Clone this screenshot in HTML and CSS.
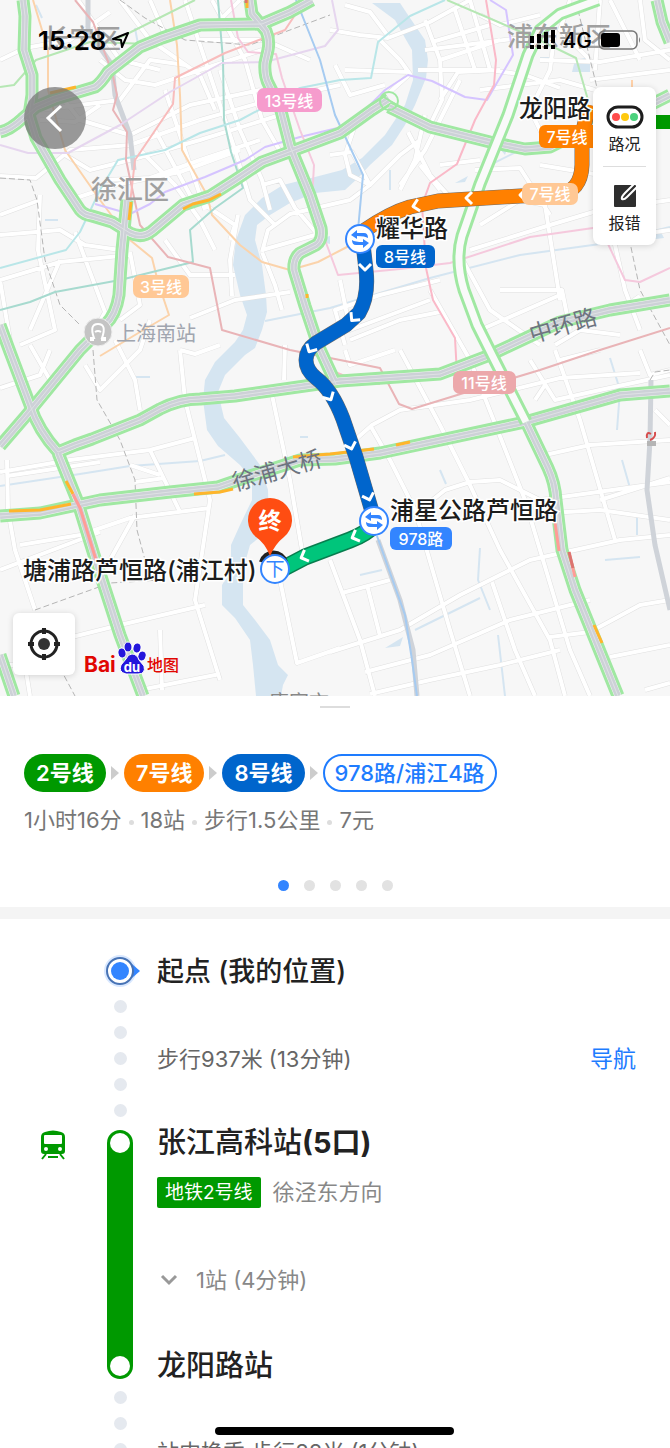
FILE: index.html
```html
<!DOCTYPE html>
<html lang="zh-CN">
<head>
  <meta charset="UTF-8" />
  <meta name="viewport" content="width=device-width, initial-scale=1.0"/>
  <title>公交路线</title>
  <link rel="stylesheet" href="styles.css">
</head>
<body>
  <div class="app">
    <section class="map">
      <svg class="map-canvas" viewBox="0 0 670 696" role="img" aria-label="路线地图">
        <defs>
          <g id="streets">
            <path d="M0 60L25 48L70 40L110 12M78 0L120 60L160 70M120 0L150 40L200 75L215 110M150 0L165 35L215 25L240 0M185 0L205 60L235 150L250 200L275 225M212 0L245 60L262 120L285 160M60 95L80 120L130 135L190 105L260 90M40 120L75 122L100 105M40 110L120 100L150 60L185 65M100 60L125 80L155 85L200 70L262 50"/>
            <path d="M0 176L36 178L70 150L130 145L200 120L270 100L340 85M65 155L90 170L130 160L200 140L280 115M45 160L70 200L115 185L180 172L240 150M105 180L150 178L200 160L260 140M140 150L175 185L200 220L215 250M155 130L190 195L235 225L230 240M165 90L185 150L205 210M220 70L240 130L262 180L270 210M200 40L265 40L310 60M0 235L60 230L85 245L120 250M40 195L38 250L55 330L20 345M0 215L40 200M75 232L105 312L85 350M0 280L60 262L130 255M130 252L140 305L120 320M165 240L190 275L235 275M238 215L230 260L232 296M60 260L30 330M10 340L0 280"/>
            <path d="M262 185L280 180L295 208L318 235M262 252L268 230L290 214L350 200L370 185M262 250L315 235M262 252L275 285L282 310M190 318L235 300L290 292M0 388L40 375L50 350M50 380L30 345M85 365L100 390L140 350L150 320M115 340L135 380L140 410M180 350L185 400L200 460L210 500L195 600L220 680M0 472L70 460L150 450L195 438M7 460L8 510L15 550L35 610M7 476L100 462M130 465L160 475M150 450L180 512M135 482L165 478M20 545L80 535L130 518L210 508M110 560L135 515M0 570L100 532M60 640L120 625L205 605M160 630L162 690M140 690L220 674M25 665L30 696M0 665L30 665M272 395L290 480L302 550M280 580L297 663L340 648M180 350L195 354L220 345M285 345L284 380"/>
            <path d="M330 30L360 35L388 38L430 22L470 0M378 38L400 60L410 74L390 92M345 70L410 72M345 5L370 12L388 36M335 65L350 95L385 85M425 20L440 60L442 100L430 125M455 10L475 70M440 60L500 40M470 0L490 70M432 42L490 25M440 100L458 72L500 70M330 155L352 152L370 185M355 125L345 155L350 175L370 185L400 155L420 140M408 132L430 175L448 195M400 185L425 150L440 120L460 80M420 165L440 190M425 50L520 38M418 70L490 70L525 75L560 88M425 115L415 160L400 190M440 165L480 160M555 30L550 70L530 110M600 0L595 70M540 60L600 62L670 50M590 80L670 70M480 90L560 80L595 90M610 0L640 60M480 15L500 25L540 15M640 0L645 40L670 60M570 0L560 30L590 60M530 110L545 140"/>
            <path d="M470 250L550 225L600 210L670 200M480 225L520 200L545 205L560 300M475 170L520 168L550 215M500 290L562 290L570 330M430 290L470 360L525 500L570 650L590 696M480 330L560 295M340 280L350 330L430 300M345 345L335 310L380 295L440 280M350 340L400 320L440 312M460 255L490 310L540 345M605 200L625 290L640 330M600 240L670 230M620 310L640 296M555 345L580 330L620 335M540 165L600 175"/>
            <path d="M345 350L350 365L395 350M400 350L440 425L470 485L500 550L550 640L565 696M355 440L372 425L400 410L470 400L560 378L640 373M370 425L390 460L415 510L450 630L470 696M420 510L445 490L470 482L500 480L540 500L670 482M545 455L590 445L670 440M555 350L580 420L615 540M530 360L555 400L600 390L670 375M640 350L650 375L670 370M560 360L600 350M330 560L360 640L375 696M342 593L390 580M367 585L380 636M330 652L400 630L460 595L530 560L620 540L670 535M365 672L430 655L510 620L590 600M550 513L600 510L670 520M492 582L515 650L535 696M370 694L430 680L500 665L560 650M550 637L590 632L640 605L670 600M610 657L670 645M645 690L670 683M600 500L670 478M655 410L670 425M535 400L545 385"/>
          </g>
          <g id="expressways">
            <path d="M23 0L25 16L24 50L32 75L32 95L29 115L36 138L60 180L80 210Q84 215 92 216L112 222L130 233Q142 239 152 231L183 205L210 196L235 180L262 162L300 148L340 133L372 110L389 99"/>
            <path d="M389 107L430 127L490 142L525 149L550 147L580 132L630 115L670 95"/>
            <path d="M0 132Q10 130 22 119L36 107L55 99L95 87Q101 83 108 72L140 47L162 38L200 25L262 24L290 12L312 0"/>
            <path d="M250 0L252 14L266 31Q270 40 268 50L265 63Q264 76 269 85L280 107L290 146L310 195L321 228Q323 240 316 245L300 253Q293 259 294 270L305 306L318 345L336 384"/>
            <path d="M127 200L122 250L119 295Q116 315 105 325L80 350L25 417L0 446"/>
            <path d="M0 325L10 352L30 405Q38 430 58 452L75 445L92 439L140 420L160 409Q180 399 200 399L235 396L340 381L440 374L490 355L560 322L610 310L670 300"/>
            <path d="M58 453L77 500L95 558L120 635L143 696"/>
            <path d="M0 516L40 513L100 500L170 492L218 487L250 476L300 460L335 459L380 453L525 422L620 395L670 391"/>
            <path d="M526 422L548 468Q555 483 556 500L562 550L575 590L618 696"/>
            <path d="M0 655L14 696M657 0L662 22L670 42"/>
          </g>
          <g id="elevated">
            <path d="M598 0L560 14L540 30L528 55L508 115L480 184L462 236Q455 260 464 290L477 325L492 355L526 422"/>
          </g>
          <path id="orange-route" d="M589 105L582 135L582 165Q581 192 558 194L520 196L438 201L410 207Q390 213 365 230L360 236"/>
          <path id="blue-route" d="M362 235L366 270Q369 296 359 313L346 325L316 343Q306 350 306 360Q306 370 316 378Q332 390 343 419L356 457L373 515"/>
          <g id="transfer">
            <circle r="14" fill="#fff" stroke="#3385ff" stroke-width="2"/>
            <path d="M-9-4L-3-9V-6H4Q8-6 8-1Q5-3-3-3V0ZM9 4L3 9V6H-4Q-8 6-8 1Q-5 3 3 3V0Z" fill="#3385ff"/>
          </g>
          <path id="chevron" class="chevron" d="M4-6L-2 0L4 6"/>
        </defs>

        <!-- water -->
        <path class="water" d="M372 3L395 20L405 38L412 50L413 80L405 105L385 135L362 158L342 170L315 177L283 185L262 198L245 215L236 240L233 265L240 295L247 315L243 330L235 342L215 362L205 380L203 400L207 430L218 446L240 465L252 480V500L240 525L231 545V570L222 585V605L235 618L250 640L253 665L256 696H281L283 685L288 675L278 665L270 640L255 620L243 605V570L250 545L269 530L268 490L260 465L240 438L224 418L218 392L225 375L245 355L255 348L262 330L267 312L266 295L262 265L255 240L257 225L270 215L290 203L315 193L345 190L358 178L370 165L392 145L405 125L415 105L426 78L428 60L425 40L408 15L400 3Z"/>
        <path class="creek" d="M265 321L330 308L430 278L520 255L600 244L670 227M0 486L80 474L130 466L200 461L225 455M36 5L42 18M135 28L140 55M480 170L520 150M390 170V190M610 358L620 390L617 430M622 460L630 488M480 548L478 580L490 610M498 635L505 696M415 630L480 598M360 575L382 570M45 220H58M136 377H150M300 437H308M605 560L640 557M440 470L446 484M540 58H550M637 515V535"/>
        <path class="water" d="M575 60L590 57V72H572ZM385 648L403 637L400 646ZM455 183L468 176L465 182ZM315 240L330 236V244ZM648 240L660 230L664 238ZM501 150L507 149L505 155Z"/>

        <use href="#streets" class="street-edge"/>
        <use href="#streets" class="street"/>
        <path class="rail" d="M120 0L145 18L185 40L250 45L330 15M0 178L30 180L37 200L45 260L60 305L80 325M93 350L97 400L120 440L135 480L137 530L145 560M35 610L110 583L160 580M60 668L75 696M578 10L600 100L640 290L670 345M650 380L655 372L670 370"/>
        <path class="rail-wide" d="M651 380L650 440L647 490L655 545L670 610M88 0V30L112 65L115 95L130 135L134 170M378 540L400 600L413 650L417 696"/>

        <!-- metro network -->
        <g class="metro">
          <path stroke="#fbd3ab" d="M33 0L48 50L48 90L65 150L100 200L130 240L152 258L158 282L169 315L140 332L100 356M170 0L177 45L180 95L182 150L207 195L212 215L240 245L262 262L290 270L318 262L345 248L360 240"/>
          <path stroke="#a7dacf" d="M218 0L223 60L224 120L231 152L243 188L215 208L190 230L193 262L120 280L55 292L30 302L0 310"/>
          <path stroke="#b9e6e8" d="M0 268L66 250L80 232L100 190L118 160L165 150L200 133L240 120L300 88L340 80L371 78L378 42L410 16L445 0"/>
          <path stroke="#e9b4b7" d="M75 0L93 22L112 72L117 95L113 110L127 132L126 160L140 225L168 257L210 268L222 330L290 350L380 368L399 404L412 409L480 388L540 370L600 350L670 328"/>
          <path stroke="#f8bcbc" d="M295 15L285 30L225 53L175 78L173 104L135 160L129 212"/>
          <path stroke="#d5c4ff" d="M95 204L130 214L150 204L165 192L205 177L245 160L265 147L300 137L350 125L385 90L408 75L432 81L465 97L487 100L513 55L506 10L490 0"/>
          <path stroke="#e6d6ef" d="M0 145L28 153L68 153L120 125L170 92L222 63L265 62L325 46L338 30L332 0"/>
          <path stroke="#a6cbf1" d="M296 0L320 60L335 115L363 175L358 230M377 536L405 615L412 660L417 696"/>
          <path stroke="#f5c9dd" d="M231 0L238 38L248 52L276 54L282 78L300 130L314 165L312 200L325 240L338 275L400 269L450 263L530 237L600 227L625 280L640 282L670 268"/>
          <path stroke="#fab9c8" d="M486 0L496 60L494 85L475 120L457 164L430 183L422 205L426 268L433 300L455 338L457 375M330 370L350 378L380 384"/>
          <path stroke="#b6e7b4" d="M0 87L14 85L36 60L90 42L150 44M115 40L195 0M447 0L535 38L576 58L588 100"/>
          <path stroke="#ffd1a8" d="M632 80V100"/>
        </g>

        <use href="#expressways" class="express-edge"/>
        <use href="#expressways" class="express-gap"/>
        <use href="#expressways" class="express-core"/>
        <use href="#expressways" class="express-mid"/>
        <use href="#elevated" class="express-edge"/>
        <use href="#elevated" class="express-white"/>
        <circle class="ring" cx="389" cy="101" r="9"/>
        <path class="ring" d="M382 96L397 105"/>
        <path class="slow" d="M247 0V8M50 93L76 87M131 202L129 220M183 209L193 204L209 200L221 194M9 511L40 510L71 504M66 481L73 494M194 494L220 492L233 489M293 457L330 454L374 449M396 445L410 442M594 625L602 643M307 294V298"/>
        <path class="jam" d="M73 494L80 508L96 560M555 523L559 551M569 552L575 577"/>
        <path class="dark-jam" d="M569 552L573 568M246 0V3"/>

        <!-- names on the map -->
        <text class="district" x="43" y="48">长宁区</text>
        <text class="district" x="91" y="199">徐汇区</text>
        <text class="district" x="507" y="46">浦东新区</text>
        <text class="town" x="269" y="710">唐家市</text>
        <text class="road-name" transform="translate(532 343) rotate(-16)">中环路</text>
        <text class="road-name" transform="translate(235 491) rotate(-16)">徐浦大桥</text>
        <text class="railway-name" x="116" y="341">上海南站</text>
        <circle cx="98" cy="332" r="14" fill="#c4c4c4" stroke="#eee"/>
        <path d="M94 340H91V338H94Q89 324 98 324Q107 324 102 338H105V340H101M95 332Q98 330 101 332" fill="none" stroke="#fff" stroke-width="2"/>
        <path d="M647 438Q646 431 651 434M650 440Q656 438 655 432" fill="none" stroke="#d64d4d" stroke-width="2"/>
        <path d="M647 441H656V446H647Z" fill="#b5b5b5"/>

        <g class="line-tag">
          <rect x="257" y="88" width="65" height="24" rx="7" fill="#f69ccd"/><text x="289" y="107">13号线</text>
          <rect x="133" y="275" width="56" height="23" rx="7" fill="#ffc895"/><text x="161" y="293">3号线</text>
          <rect x="453" y="371" width="63" height="23" rx="7" fill="#eca8ab"/><text x="484" y="389">11号线</text>
        </g>

        <!-- planned route -->
        <path class="route-green" d="M656 122H670"/>
        <path class="route-walk-edge" d="M284 568L305 557L350 540Q366 534 374 525"/>
        <path class="route-walk" d="M284 568L305 557L350 540Q366 534 374 525"/>
        <use href="#orange-route" class="route-edge"/>
        <use href="#orange-route" class="route-orange"/>
        <use href="#blue-route" class="route-edge"/>
        <use href="#blue-route" class="route-blue"/>
        <use href="#chevron" transform="translate(415 206) rotate(-12)"/>
        <use href="#chevron" transform="translate(468 198)"/>
        <use href="#chevron" transform="translate(522 195)"/>
        <use href="#chevron" transform="translate(365 268) rotate(-90)"/>
        <use href="#chevron" transform="translate(353 319) rotate(-50)"/>
        <use href="#chevron" transform="translate(310 350) rotate(-60)"/>
        <use href="#chevron" transform="translate(330 398) rotate(-120)"/>
        <use href="#chevron" transform="translate(351 447) rotate(-108)"/>
        <use href="#chevron" transform="translate(369 498) rotate(-108)"/>
        <use href="#chevron" transform="translate(303 557) rotate(-22)"/>
        <use href="#chevron" transform="translate(354 537) rotate(-22)"/>

        <g class="line-tag">
          <rect x="522" y="183" width="56" height="22" rx="7" fill="#ffc895"/><text x="550" y="200">7号线</text>
          <rect x="539" y="125" width="60" height="23" rx="6" fill="#ff8000"/><text x="567" y="143">7号线</text>
          <rect x="376" y="245" width="59" height="23" rx="6" fill="#0065cc"/><text x="405" y="263">8号线</text>
          <rect x="390" y="527" width="62" height="23" rx="6" fill="#3385ff"/><text x="421" y="545">978路</text>
        </g>
        <use href="#transfer" x="360" y="239"/>
        <use href="#transfer" x="374" y="521"/>

        <path d="M261 562A13 13 0 0 1 286 562" fill="none" stroke="#222" stroke-width="4"/>
        <circle cx="275" cy="569" r="14" fill="#fff" stroke="#3385ff" stroke-width="2"/>
        <text class="alight" x="275" y="576">下</text>
        <path d="M270 556Q265 543 256 537A22 22 0 1 1 284 537Q275 544 270 556Z" fill="#ff4d12"/>
        <text class="terminus" x="270" y="529">终</text>

        <g class="stop-name">
          <text x="519" y="117">龙阳路</text>
          <text x="376" y="237">耀华路</text>
          <text x="390" y="519">浦星公路芦恒路</text>
          <text x="23" y="579">塘浦路芦恒路(浦江村)</text>
        </g>

        <!-- Baidu logo -->
        <g class="brand">
          <text class="brand-latin" x="84" y="672">Bai</text>
          <g fill="#2417dc" stroke="#fff" stroke-width="1">
            <ellipse cx="122" cy="653" rx="4" ry="5" transform="rotate(-12 122 653)"/>
            <ellipse cx="128" cy="647" rx="4" ry="5"/>
            <ellipse cx="137" cy="648" rx="4" ry="5" transform="rotate(12 137 648)"/>
            <ellipse cx="142" cy="656" rx="4" ry="5" transform="rotate(20 142 656)"/>
            <path d="M132 654Q137 654 139 660L144 666Q146 674 138 674H126Q118 672 121 665L126 659Q128 654 132 654Z"/>
          </g>
          <text class="brand-du" x="132" y="672">du</text>
          <text class="brand-map" x="147" y="671">地图</text>
        </g>
      </svg>

      <header class="status-bar">
        <div class="clock">
          <span>15:28</span>
          <svg width="18" height="18" viewBox="0 0 18 18"><path d="M16 2L1 8L9 9L10 16Z" fill="none" stroke="#000" stroke-width="2" stroke-linejoin="round"/></svg>
        </div>
        <div class="signal">
          <svg width="28" height="22" viewBox="0 0 28 22">
            <path d="M1 7H5V14H1ZM8 5H12V14H8ZM15 3H19V14H15ZM22 1H26V14H22ZM1 16H5V20H1ZM8 16H12V20H8ZM15 16H19V20H15ZM22 16H26V20H22Z"/>
          </svg>
          <span>4G</span>
          <svg width="44" height="22" viewBox="0 0 44 22">
            <rect x="1" y="2" width="38" height="18" rx="5" fill="none" stroke="#777" stroke-width="1.5"/>
            <rect x="3" y="4" width="19" height="14" rx="3"/>
            <path d="M41 8Q43 11 41 14Z" fill="#777"/>
          </svg>
        </div>
      </header>

      <button class="back" type="button" aria-label="返回">
        <svg width="62" height="62" viewBox="0 0 62 62"><path d="M37 19L24 31L37 44" fill="none" stroke="#fff" stroke-width="3"/></svg>
      </button>

      <div class="tools">
        <button type="button">
          <svg width="38" height="24" viewBox="0 0 38 24">
            <rect x="2" y="2" width="34" height="20" rx="10" fill="#fff" stroke="#1d1d1d" stroke-width="3"/>
            <circle cx="10" cy="12" r="4" fill="#ff4c4c"/><circle cx="19" cy="12" r="4" fill="#ffc90e"/><circle cx="28" cy="12" r="4" fill="#4cd27d"/>
          </svg>
          <span>路况</span>
        </button>
        <button type="button">
          <svg width="24" height="24" viewBox="0 0 24 24">
            <rect x="1" y="1" width="22" height="22" rx="1" fill="#2e2e2e"/>
            <path d="M21 0L12 9Q8 13 9 15Q11 16 14 13L24 3" fill="none" stroke="#fff" stroke-width="2"/>
          </svg>
          <span>报错</span>
        </button>
      </div>

      <button class="locate" type="button" aria-label="定位">
        <svg width="32" height="32" viewBox="0 0 32 32">
          <circle cx="16" cy="16" r="13" fill="none" stroke="#222" stroke-width="3"/>
          <circle cx="16" cy="16" r="6" fill="#333"/>
          <path d="M16 0V6M16 26V32M0 16H6M26 16H32" stroke="#222" stroke-width="4"/>
        </svg>
      </button>
    </section>

    <section class="summary">
      <div class="handle"></div>
      <div class="lines">
        <span class="pill green">2号线</span>
        <span class="arrow"></span>
        <span class="pill orange">7号线</span>
        <span class="arrow"></span>
        <span class="pill blue">8号线</span>
        <span class="arrow"></span>
        <span class="pill outline">978路/浦江4路</span>
      </div>
      <p class="meta"><span>1小时16分</span><span>18站</span><span>步行1.5公里</span><span>7元</span></p>
      <div class="pager">
        <button class="active" type="button" aria-label="方案1"></button>
        <button type="button" aria-label="方案2"></button>
        <button type="button" aria-label="方案3"></button>
        <button type="button" aria-label="方案4"></button>
        <button type="button" aria-label="方案5"></button>
      </div>
    </section>

    <ol class="steps">
      <li class="step start">
        <div class="rail-col">
          <svg class="origin" width="44" height="36" viewBox="0 0 44 36">
            <circle cx="22" cy="18" r="16" fill="#d9e8ff"/>
            <path d="M34 11L42 18L34 25Z" fill="#3385ff"/>
            <circle cx="22" cy="18" r="13" fill="#fff" stroke="#4773b5" stroke-width="2"/>
            <circle cx="22" cy="18" r="9" fill="#3385ff"/>
          </svg>
        </div>
        <h2>起点 (我的位置)</h2>
      </li>
      <li class="step walk">
        <div class="rail-col dots"><i></i><i></i><i></i><i></i><i></i></div>
        <p>步行937米 (13分钟)</p>
        <a href="#nav">导航</a>
      </li>
      <li class="step ride">
        <svg class="train" width="26" height="30" viewBox="0 0 26 30">
          <path d="M5 2Q13-1 21 2Q25 3 25 7V21Q25 24 22 24H4Q1 24 1 21V7Q1 3 5 2Z" fill="#090"/>
          <rect x="4" y="5" width="18" height="9" rx="1" fill="#fff"/>
          <circle cx="6" cy="19" r="2" fill="#fff"/><circle cx="20" cy="19" r="2" fill="#fff"/>
          <path d="M6 24L2 29M20 24L24 29M8 27H18" stroke="#090" stroke-width="2"/>
        </svg>
        <div class="rail-col bar"><i></i><i></i></div>
        <div class="ride-info">
          <h3>张江高科站<b>(5口)</b></h3>
          <div class="direction"><span class="badge">地铁2号线</span><span>徐泾东方向</span></div>
          <button class="stops" type="button">
            <svg width="18" height="12" viewBox="0 0 18 12"><path d="M2 2L9 9L16 2" fill="none" stroke="#999" stroke-width="3"/></svg>
            <span>1站 (4分钟)</span>
          </button>
          <h3>龙阳路站</h3>
        </div>
      </li>
      <li class="step transfer">
        <div class="rail-col dots"><i></i><i></i><i></i></div>
        <p>站内换乘 步行88米 (1分钟)</p>
      </li>
    </ol>
    <div class="home-indicator"></div>
  </div>
</body>
</html>
```

FILE: styles.css
```css
* {
  box-sizing: border-box;
}

body {
  margin: 0;
  font-family: Inter, "Noto Sans CJK SC", sans-serif;
  background: #fff;
  color: #222;
}

h2, h3, p, ol {
  margin: 0;
  padding: 0;
  list-style: none;
}

button {
  border: none;
  background: none;
  padding: 0;
  font: inherit;
  color: inherit;
  cursor: pointer;
}

svg {
  display: block;
}

.app {
  position: relative;
  height: 100vh;
  overflow: hidden;
}

/* map */
.map {
  position: relative;
  background: #f7f7f7;
}

.map-canvas {
  width: 100%;
  height: auto;
  overflow: hidden;
}

.creek, .street, .street-edge, .rail, .rail-wide, .metro,
.express-edge, .express-gap, .express-core, .express-mid, .express-white,
.ring, .slow, .jam, .dark-jam, .route-edge, .route-orange, .route-blue,
.route-green, .route-walk, .route-walk-edge, .chevron {
  fill: none;
  stroke-linejoin: round;
}

.water { fill: #d5e5f1; }
.creek { stroke: #d5e5f1; stroke-width: 2; }
.street-edge { stroke: #e0e0e0; stroke-width: 5; }
.street { stroke: #fff; stroke-width: 4; }
.rail { stroke: #b5b5b5; stroke-width: 1; stroke-dasharray: 6 3; }
.rail-wide { stroke: #cfd3d9; stroke-width: 5; }
.metro { stroke-width: 2; }
.express-edge { stroke: #a0e8a2; stroke-width: 13; }
.express-gap { stroke: #f3f3f3; stroke-width: 7; }
.express-core { stroke: #cdd1d7; stroke-width: 6; }
.express-mid { stroke: #dfe2e5; stroke-width: 1; }
.express-white { stroke: #fafafa; stroke-width: 7; }
.ring { stroke: #a0e8a2; stroke-width: 2; }
.slow { stroke: #ffb52c; stroke-width: 3; }
.jam { stroke: #ff9c97; stroke-width: 3; }
.dark-jam { stroke: #dc7470; stroke-width: 3; }

.route-edge { stroke: #6b6b6b; stroke-width: 15; }
.route-orange { stroke: #ff8000; stroke-width: 14; }
.route-blue { stroke: #0065cc; stroke-width: 14; }
.route-green { stroke: #090; stroke-width: 14; }
.route-walk-edge { stroke: #087d4e; stroke-width: 17; }
.route-walk { stroke: #00c57b; stroke-width: 14; }
.chevron { stroke: #fff; stroke-width: 3; }

.map-canvas text {
  font-family: Inter, "Noto Sans CJK SC", sans-serif;
}

.district {
  font-size: 26px;
  font-weight: 500;
  fill: #a0a0a0;
}

.town {
  font-size: 20px;
  fill: #888;
}

.road-name {
  font-size: 23px;
  fill: #6d7480;
}

.railway-name {
  font-size: 20px;
  fill: #a0a5af;
}

.line-tag text {
  font-size: 16px;
  font-weight: 500;
  fill: #fff;
  text-anchor: middle;
}

.stop-name text {
  font-size: 24px;
  font-weight: 500;
  fill: #1c1c1c;
  stroke: #fff;
  stroke-width: 3;
  paint-order: stroke;
}

.alight, .terminus, .brand-du {
  text-anchor: middle;
}

.alight {
  font-size: 19px;
  fill: #3385ff;
}

.terminus {
  font-size: 23px;
  font-weight: 700;
  fill: #fff;
}

.brand text {
  font-weight: 700;
  fill: #e10602;
}

.brand-latin {
  font-size: 21px;
}

.brand .brand-du {
  font-size: 13px;
  fill: #fff;
}

.brand .brand-map {
  font-size: 16px;
  font-weight: 500;
}

.status-bar {
  position: absolute;
  top: 24px;
  left: 38px;
  right: 28px;
  display: flex;
  justify-content: space-between;
  align-items: center;
  height: 32px;
  color: #000;
}

.clock, .signal {
  display: flex;
  align-items: center;
  gap: 6px;
}

.clock {
  font-size: 26px;
  font-weight: 600;
}

.signal {
  font-size: 21px;
  font-weight: 500;
}

.back {
  position: absolute;
  top: 87px;
  left: 24px;
  border-radius: 50%;
  background: rgba(120, 120, 120, 0.75);
}

.tools {
  position: absolute;
  top: 87px;
  right: 14px;
  width: 63px;
  padding: 0 10px;
  border-radius: 8px;
  background: #fff;
  box-shadow: 0 1px 6px rgba(0, 0, 0, 0.15);
}

.tools button {
  display: flex;
  flex-direction: column;
  align-items: center;
  justify-content: center;
  gap: 4px;
  width: 100%;
  height: 79px;
  padding-top: 6px;
  font-size: 16px;
  line-height: 22px;
}

.tools button + button {
  border-top: 1px solid #ddd;
}

.locate {
  position: absolute;
  left: 13px;
  bottom: 21px;
  padding: 15px;
  border-radius: 6px;
  background: #fff;
  box-shadow: 0 1px 6px rgba(0, 0, 0, 0.15);
}

/* route summary */
.summary {
  position: relative;
  padding: 10px 24px 16px;
  background: #fff;
  border-bottom: 12px solid #f4f4f4;
}

.handle {
  width: 30px;
  height: 2px;
  margin: 0 auto 46px;
  background: #ddd;
}

.lines {
  display: flex;
  align-items: center;
  gap: 5px;
}

.pill {
  height: 38px;
  padding: 0 12px;
  border-radius: 19px;
  font-size: 22px;
  font-weight: 600;
  line-height: 38px;
  color: #fff;
}

.green { background: #090; }
.orange { background: #ff8000; }
.blue { background: #0065cc; }

.outline {
  padding: 0 10px;
  border: 2px solid #1e7cff;
  line-height: 34px;
  font-weight: 500;
  color: #1e7cff;
}

.arrow {
  border-left: 8px solid #ccc;
  border-top: 7px solid transparent;
  border-bottom: 7px solid transparent;
}

.meta {
  display: flex;
  margin-top: 12px;
  font-size: 22px;
  line-height: 32px;
  color: #777;
}

.meta span + span::before {
  content: "";
  display: inline-block;
  width: 5px;
  height: 5px;
  margin: 0 7px;
  border-radius: 50%;
  background: #ddd;
  vertical-align: middle;
}

.pager {
  display: flex;
  justify-content: center;
  gap: 15px;
  margin-top: 44px;
}

.pager button {
  width: 11px;
  height: 11px;
  border-radius: 50%;
  background: #e2e2e2;
}

.pager .active {
  background: #3385ff;
}

/* step list */
.steps {
  padding: 34px 34px 0 0;
}

.step {
  display: grid;
  grid-template-columns: 107px 26px 1fr auto;
}

.rail-col {
  grid-column: 2;
  display: flex;
  flex-direction: column;
  align-items: center;
}

.step h2, .step p, .ride-info {
  grid-column: 3;
  margin-left: 24px;
}

.step h2 {
  font-size: 27px;
  font-weight: 500;
  line-height: 38px;
  height: 36px;
}

.dots {
  gap: 13px;
}

.dots i {
  width: 13px;
  height: 13px;
  border-radius: 50%;
  background: #e5e9ef;
}

.walk {
  align-items: center;
  padding: 11px 0 13px;
}

.step p {
  font-size: 22px;
  line-height: 26px;
  color: #666;
}

.step a {
  font-size: 23px;
  line-height: 26px;
  color: #1e7cff;
  text-decoration: none;
}

.train {
  grid-column: 1;
  margin-left: 40px;
}

.bar {
  justify-content: space-between;
  padding: 3px 0;
  border-radius: 13px;
  background: #090;
}

.bar i {
  width: 20px;
  height: 20px;
  border-radius: 50%;
  background: #fff;
}

.ride-info h3 {
  font-size: 29px;
  font-weight: 500;
  line-height: 26px;
}

.direction {
  display: flex;
  align-items: center;
  gap: 12px;
  margin-top: 21px;
  font-size: 22px;
  line-height: 31px;
  color: #888;
}

.badge {
  padding: 0 8px;
  border-radius: 2px;
  background: #090;
  font-size: 19px;
  color: #fff;
}

.stops {
  display: flex;
  align-items: center;
  gap: 18px;
  margin: 59px 0 60px;
  padding-left: 3px;
  font-size: 22px;
  line-height: 26px;
  color: #888;
}

.transfer .dots {
  padding-top: 12px;
}

.transfer p {
  margin-top: 60px;
}

.home-indicator {
  position: absolute;
  bottom: 13px;
  left: 50%;
  width: 239px;
  height: 8px;
  margin-left: -120px;
  border-radius: 4px;
  background: #000;
}
```
